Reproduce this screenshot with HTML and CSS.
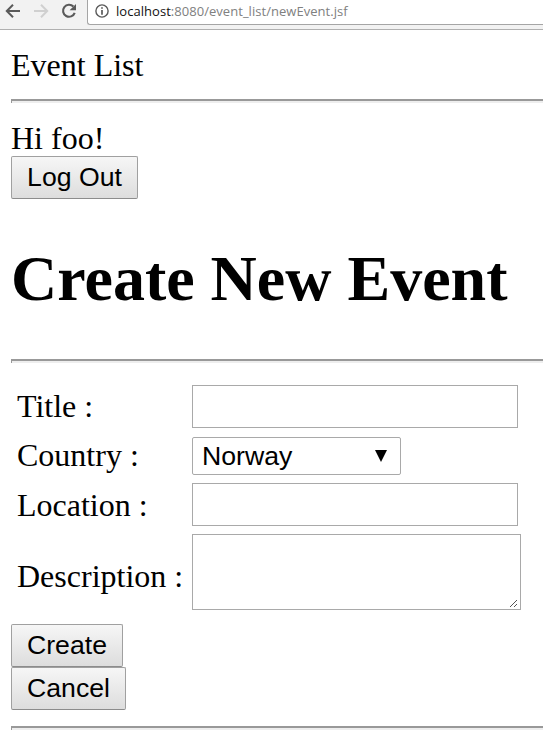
FILE: index.html
```html
<!DOCTYPE html>
<html lang="en">
<head>
<meta charset="utf-8">
<title>Event List</title>
<link rel="stylesheet" href="styles.css">
</head>
<body>
<div class="toolbar">
  <svg class="nav" width="87" height="25" viewBox="0 0 87 25" fill="none" stroke-width="2">
    <path d="M20 11H7.5M13 4.8L6.8 11L13 17.2" stroke="#5a5a5a"/>
    <path d="M34 11H46.5M41 4.8L47.2 11L41 17.2" stroke="#d0d0d0"/>
    <path d="M73.4 6.6A6 6 0 1 0 74.7 12.8" stroke="#5a5a5a" stroke-width="2.1"/>
    <path d="M76 4V10.2H69.6Z" fill="#5a5a5a"/>
  </svg>
  <div class="address">
    <svg width="14" height="14" viewBox="0 0 14 14" fill="none">
      <circle cx="7" cy="7" r="6.1" stroke="#5a5a5a" stroke-width="1.4"/>
      <path d="M7 3.2V4.8M7 6V10.8" stroke="#5a5a5a" stroke-width="1.7"/>
    </svg>
    <span class="url"><span class="host">localhost</span>:8080/event_list/newEvent.jsf</span>
  </div>
</div>
<main>
  <div class="line">Event List</div>
  <hr>
  <div class="line">Hi foo!</div>
  <button class="logout">Log Out</button>
  <h1>Create New Event</h1>
  <hr>
  <form class="fields">
    <label for="title" class="title">Title :</label><input id="title" type="text">
    <label for="country" class="country">Country :</label>
    <div class="select" id="country"><span>Norway</span><svg width="12" height="12" viewBox="0 0 12 12"><path d="M0 0H12L6 12Z"/></svg></div>
    <label for="location" class="location">Location :</label><input id="location" type="text">
    <label for="description" class="description">Description :</label>
    <div class="area" id="description"><svg width="8" height="8" viewBox="0 0 8 8" shape-rendering="crispEdges" stroke="#555" stroke-width="1"><path d="M0 7.5h1M1 6.5h1M2 5.5h1M3 4.5h1M4 3.5h1M5 2.5h1M6 1.5h1M4 7.5h1M5 6.5h1M6 5.5h1"/></svg></div>
  </form>
  <button class="create">Create</button>
  <button class="cancel">Cancel</button>
  <hr>
</main>
</body>
</html>
```
FILE: styles.css
```css
* { box-sizing: border-box; }
body {
  margin: 0;
  background: #fff;
  color: #000;
  font: 32px/37px "Liberation Serif", serif;
  overflow: hidden;
}
.toolbar {
  display: flex;
  height: 30px;
  background: #f2f2f2;
  border-bottom: 1px solid #b0b0b0;
}
.nav { flex: none; }
.address {
  display: flex;
  flex: 1;
  height: 25px;
  padding: 4px 0 0 7px;
  gap: 7px;
  background: #fff;
  border: solid #a5a5a5;
  border-width: 0 0 1px 1px;
  border-bottom-left-radius: 3px;
}
.url {
  font: 13px/15px "Open Sans", sans-serif;
  letter-spacing: 0.04px;
  color: #808080;
  white-space: nowrap;
}
.host { color: #111; }
main { padding: 16px 0 0 11px; }
.line {
  height: 37px;
  line-height: 38px;
}
hr {
  height: 4px;
  margin: 16px 0;
  border: solid #999;
  border-width: 2px 0 0 1px;
  background: #eee;
}
button {
  display: block;
  height: 43px;
  padding: 0 0 2px;
  border: 1px solid #a0a0a0;
  border-bottom-color: #8c8c8c;
  border-radius: 2px;
  background: linear-gradient(#f6f6f6, #ddd);
  color: #000;
  font: 26.67px/30px "Liberation Sans", sans-serif;
}
.logout { width: 127px; }
.create { width: 112px; margin-top: 14px; }
.cancel { width: 115px; }
h1 {
  margin: 43px 0;
  font-size: 64px;
  line-height: 74px;
}
.fields {
  display: grid;
  grid-template-columns: 175px 329px;
  grid-template-rows: 44px 38px 43px 76px;
  row-gap: 8px;
  margin: 22px 0 0 6px;
  align-items: center;
}
input, .area {
  margin: 0;
  border: 1px solid #a9a9a9;
  background: #fff;
}
input {
  width: 326px;
  height: 43px;
  align-self: start;
}
.select {
  display: flex;
  align-items: center;
  justify-content: space-between;
  width: 209px;
  height: 38px;
  padding: 0 13px 0 9px;
  border: 1px solid #a9a9a9;
  border-radius: 2px;
  font: 26.67px/36px "Liberation Sans", sans-serif;
}
.area {
  display: flex;
  align-items: flex-end;
  justify-content: flex-end;
  height: 76px;
  padding: 0 2px 2px 0;
}
.title, .country { padding-bottom: 1px; }
.location { padding-top: 1px; }
.description { padding-top: 8px; }
```
